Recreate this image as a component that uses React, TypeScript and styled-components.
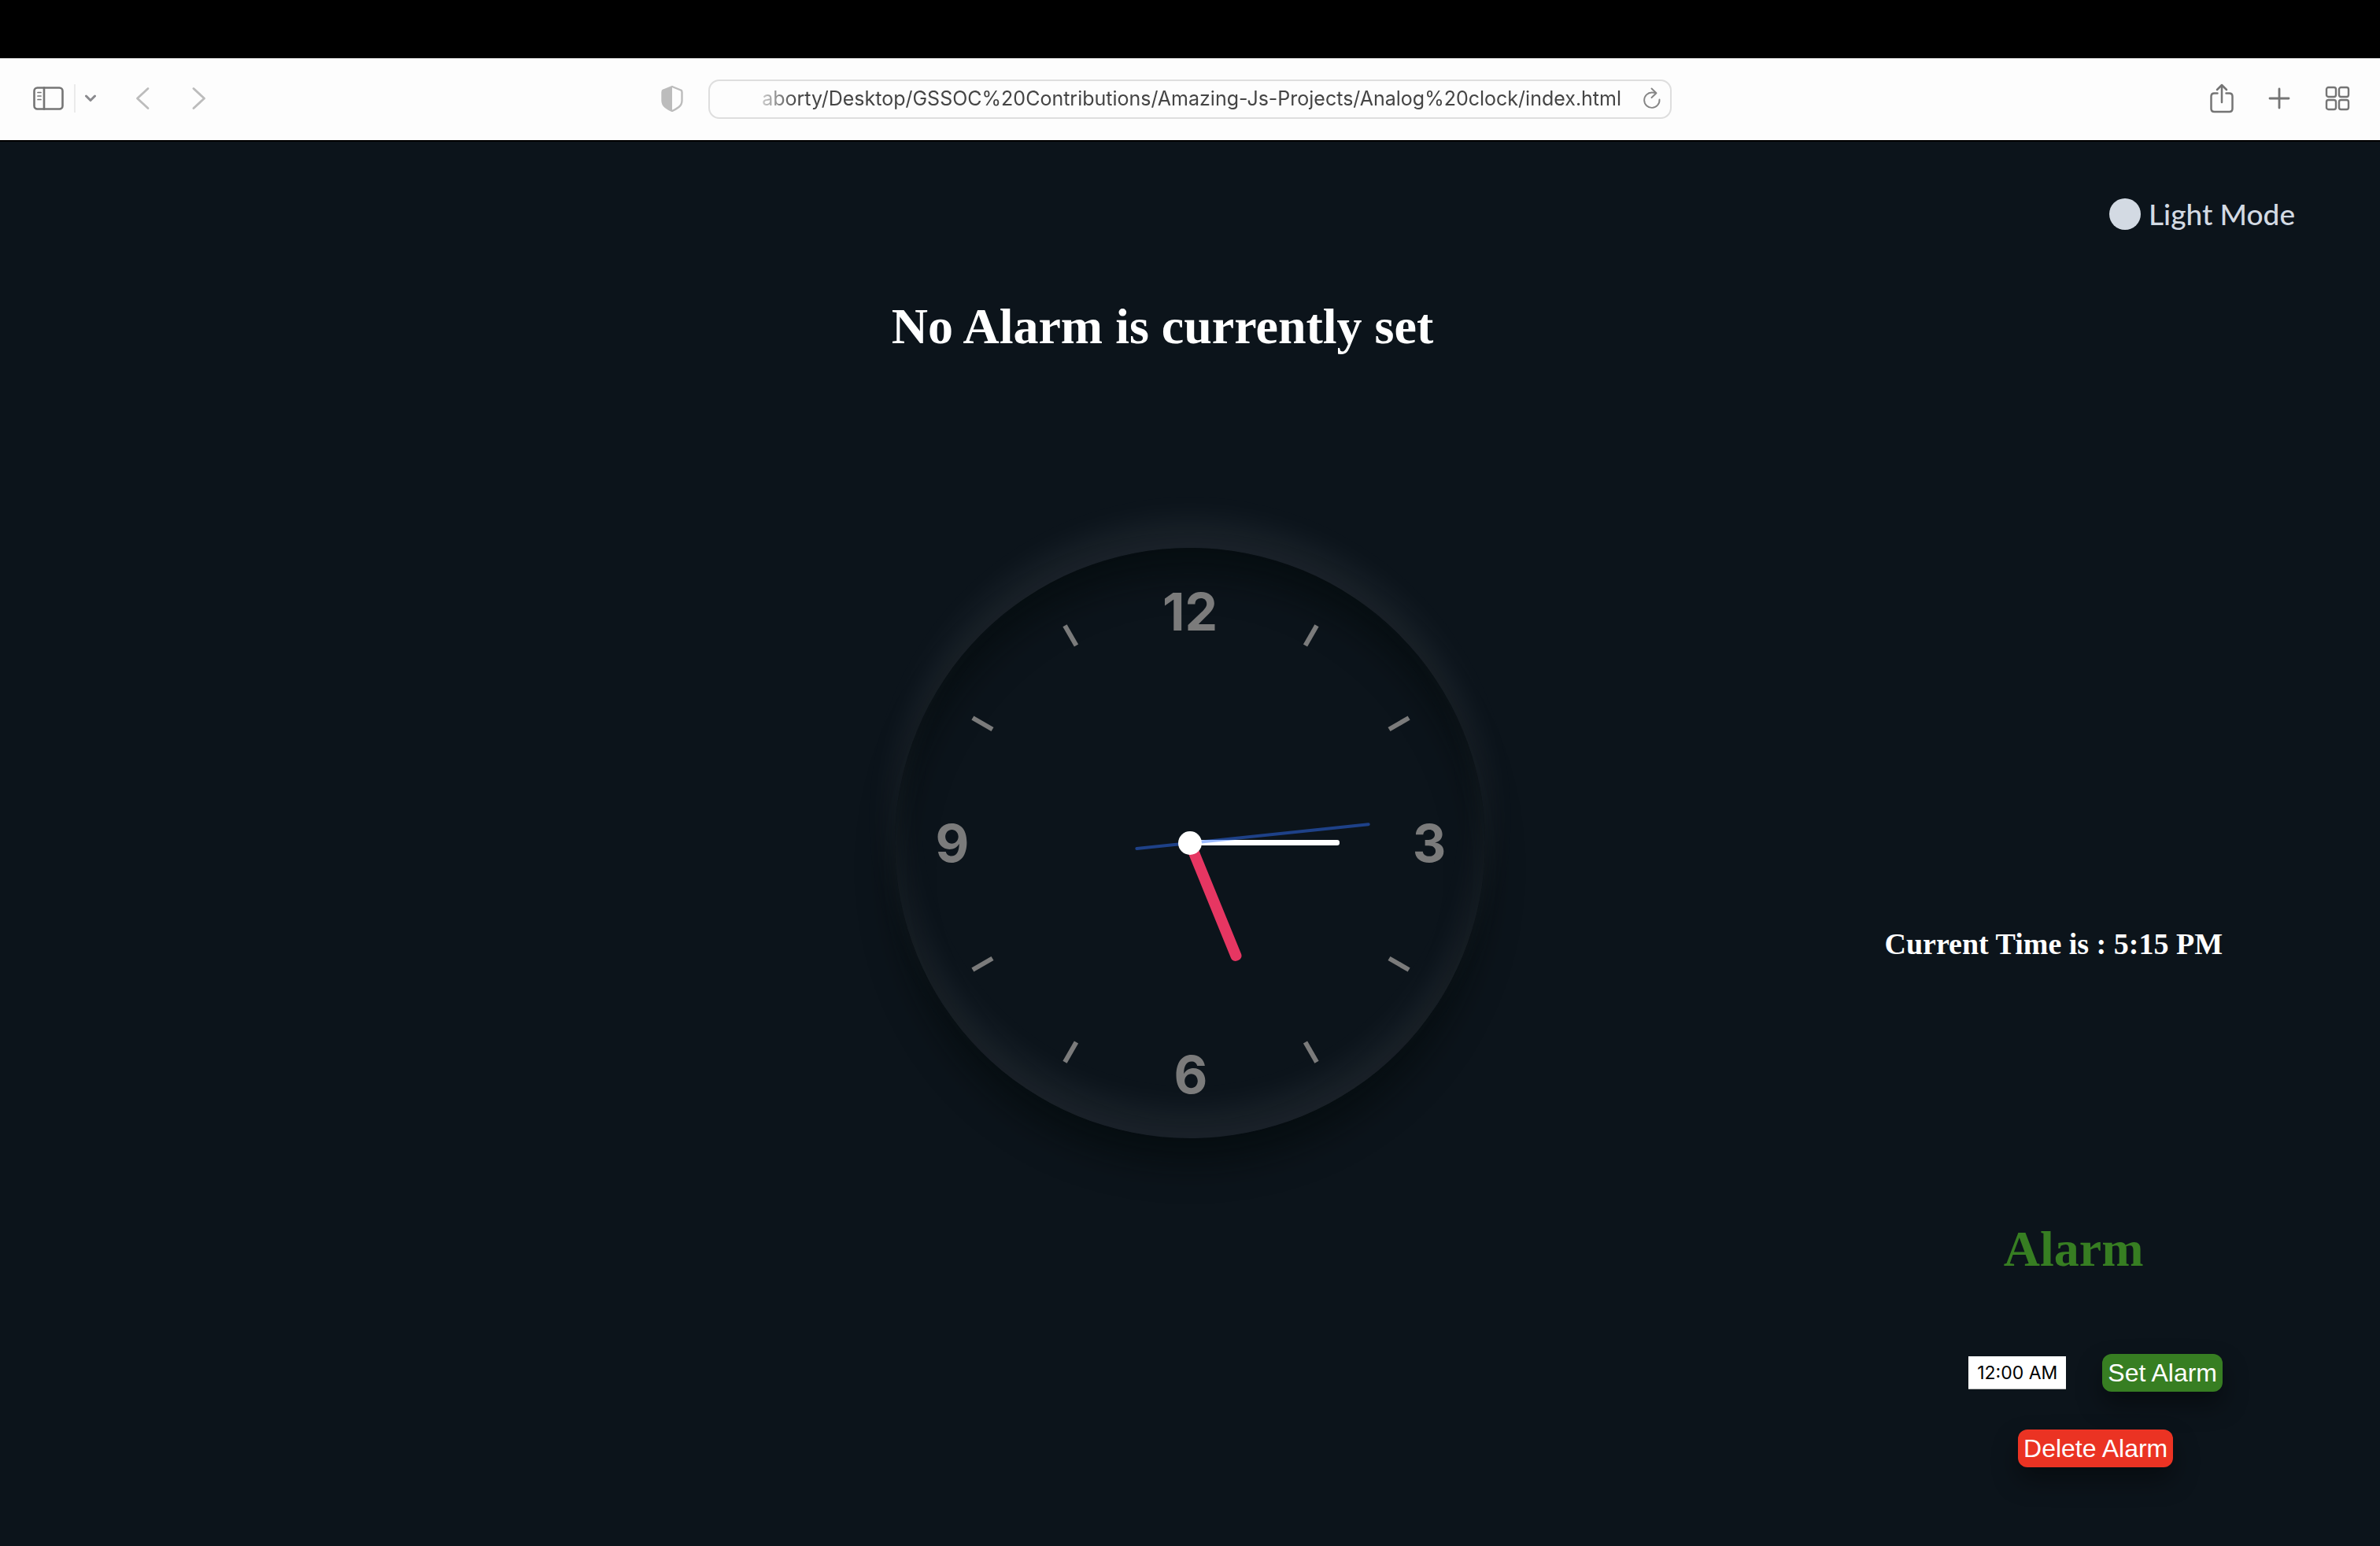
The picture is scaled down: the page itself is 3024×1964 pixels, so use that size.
import React, { useState } from "react";
import styled, { createGlobalStyle } from "styled-components";

const SERIF = `"Liberation Serif", "Times New Roman", serif`;
const SANS = `"Liberation Sans", Arial, sans-serif`;
const SYSTEM = `Inter, Roboto, sans-serif`;
const ROUND = `Lato, sans-serif`;

const GlobalStyle = createGlobalStyle`
  * { box-sizing: border-box; }
  body { margin: 0; background: #0c141b; }
  button, input { margin: 0; font: inherit; }
  h1, h2, p { margin: 0; }
`;

const Page = styled.div`
  min-height: 100vh;
  display: flex;
  flex-direction: column;
  background: #0c141b;
`;

const MenuBar = styled.div`
  height: 74px;
  background: #000;
`;

const Toolbar = styled.header`
  display: grid;
  grid-template-columns: 1fr minmax(400px, 1224px) 1fr;
  align-items: center;
  height: 106px;
  background: #fdfdfd;
  border-bottom: 2px solid #000;
`;

const ToolGroup = styled.div<{ $side: "left" | "right" }>`
  display: flex;
  align-items: center;
  justify-content: ${(p) => (p.$side === "left" ? "flex-start" : "flex-end")};
  gap: ${(p) => (p.$side === "left" ? 12 : 44)}px;
  padding: ${(p) => (p.$side === "left" ? "0 32px 2px 42px" : "0 38px 2px 0")};
`;

const Divider = styled.span`
  width: 2px;
  height: 36px;
  background: #ebebeb;
`;

const IconButton = styled.button<{ $tone?: string; $before?: number }>`
  display: flex;
  padding: 0;
  border: 0;
  background: none;
  color: ${(p) => p.$tone || "#757575"};
  margin-left: ${(p) => p.$before || 0}px;
`;

const ShieldButton = styled(IconButton)`
  margin-left: auto;
`;

const AddressBar = styled.div`
  display: flex;
  align-items: center;
  gap: 28px;
  height: 50px;
  padding: 0 12px 2px 50px;
  border: 2px solid #dedede;
  border-radius: 14px;
`;

const AddressInput = styled.input`
  flex: 1;
  min-width: 0;
  padding: 0;
  border: 0;
  outline: 0;
  background: none;
  color: #454545;
  font-family: ${SYSTEM};
  font-size: 25px;
  line-height: 32px;
  text-align: right;
  mask-image: linear-gradient(to right, transparent 0, #000 60px);
`;

const Content = styled.main`
  flex: 1;
  display: grid;
  grid-template-columns: 1fr 750px 1fr;
`;

const Center = styled.section`
  grid-column: 2;
  display: flex;
  flex-direction: column;
  align-items: center;
  gap: 245px;
  padding-top: 199px;
`;

const Status = styled.h1`
  padding-right: 70px;
  color: #fff;
  font: bold 64px/72px ${SERIF};
  white-space: nowrap;
`;

const ClockFace = styled.div`
  width: 750px;
  height: 750px;
  border-radius: 50%;
  box-shadow:
    0 -32px 44px rgba(240, 245, 255, 0.07),
    inset 0 -32px 44px rgba(240, 245, 255, 0.07),
    0 32px 44px rgba(0, 8, 8, 0.5),
    inset 0 32px 44px rgba(0, 8, 8, 0.5);
`;

const Side = styled.aside`
  display: flex;
  flex-direction: column;
  align-items: flex-end;
  padding: 68px 108px 96px 0;
`;

const ModeSwitch = styled.button`
  display: flex;
  align-items: center;
  gap: 10px;
  padding: 0;
  border: 0;
  background: none;
  color: #d3dae3;
  font: 500 37px/48px ${ROUND};
`;

const Dot = styled.span`
  width: 40px;
  height: 40px;
  border-radius: 50%;
  background: #d3dae3;
`;

const CurrentTime = styled.p`
  margin: 881px 92px 0 0;
  color: #fff;
  font: bold 38px/44px ${SERIF};
`;

const AlarmPanel = styled.form`
  display: flex;
  flex-direction: column;
  align-items: center;
  gap: 48px;
  margin: 330px 92px 0 0;
`;

const AlarmTitle = styled.h2`
  padding: 0 56px 49px 0;
  color: #377e22;
  font: bold 64px/72px ${SERIF};
`;

const AlarmRow = styled.div`
  display: flex;
  align-items: center;
  gap: 46px;
`;

const TimeInput = styled.input`
  width: 124px;
  height: 42px;
  padding: 0;
  border: 0;
  border-bottom: 1px solid #b8b8b8;
  border-radius: 0;
  background: #fff;
  color: #000;
  font: 23px/28px ${SYSTEM};
  text-align: center;
`;

const ActionButton = styled.button<{ $color: string }>`
  padding: 6px 7px;
  border: 0;
  border-radius: 12px;
  background: ${(p) => p.$color};
  box-shadow: 0 16px 32px rgba(0, 0, 0, 0.4);
  color: #fff;
  font: 32px/36px ${SANS};
`;

const stroke = (width: number) => ({
  fill: "none",
  stroke: "currentColor",
  strokeWidth: width,
  strokeLinecap: "round" as const,
  strokeLinejoin: "round" as const,
});

const SidebarIcon = () => (
  <svg width="40" height="30" viewBox="0 0 40 30">
    <g {...stroke(2.6)}>
      <rect x="1.5" y="1.5" width="36" height="27" rx="4" />
      <path d="M14 1.5v27" />
      <path strokeWidth="1.7" d="M6 7.5h4M6 12h4M6 16.500h4" />
    </g>
  </svg>
);
const ChevronDown = () => (
  <svg width="14" height="10" viewBox="0 0 14 10">
    <path {...stroke(3)} d="M1.500 2 7 7.500 12.500 2" />
  </svg>
);
const Back = () => (
  <svg width="18" height="30" viewBox="0 0 18 30">
    <path {...stroke(2.800)} d="M16 2.500 2.500 15 16 27.500" />
  </svg>
);
const Forward = () => (
  <svg width="18" height="30" viewBox="0 0 18 30">
    <path {...stroke(2.800)} d="M2 2.500 15.500 15 2 27.500" />
  </svg>
);
const Shield = () => (
  <svg width="28" height="34" viewBox="0 0 28 34">
    <path
      {...stroke(2.400)}
      d="M14 2 3 6.500Q1.500 7 1.500 9v10.500Q1.500 25 5.500 28q4 3 8.500 5 4.500-2 8.500-5 4-3 4-8.500V9q0-2-1.500-2.500Z"
    />
    <path fill="currentColor" d="M14 2 3 6.500Q1.500 7 1.500 9v10.500Q1.500 25 5.500 28q4 3 8.500 5Z" />
  </svg>
);
const Reload = () => (
  <svg width="22" height="28" viewBox="0 0 22 28">
    <path {...stroke(1.900)} d="M20.500 15.500A9.700 9.700 0 1 1 11 6.500q2.500 0 5 .6M10.500 1.500 16.500 7.200 10.500 13" />
  </svg>
);
const Share = () => (
  <svg width="30" height="38" viewBox="0 0 30 38">
    <path
      {...stroke(2.500)}
      d="M9.500 12.500H5.500q-4 0-4 4V32q0 4 4 4h19q4 0 4-4V16.500q0-4-4-4h-4M15 24V2M9 8l6-6 6 6"
    />
  </svg>
);
const Plus = () => (
  <svg width="28" height="28" viewBox="0 0 28 28">
    <path {...stroke(2.800)} d="M14 2v24M2 14h24" />
  </svg>
);
const Tiles = () => (
  <svg width="32" height="32" viewBox="0 0 32 32">
    <g {...stroke(2.400)}>
      {[2, 18].map((x) =>
        [2, 18].map((y) => <rect key={`${x}-${y}`} x={x} y={y} width="12" height="12" rx="2.500" />)
      )}
    </g>
  </svg>
);

const NUMERALS = [
  { label: "12", x: 375, y: 81 },
  { label: "3", x: 679, y: 375 },
  { label: "6", x: 376, y: 669 },
  { label: "9", x: 73, y: 375 },
];
const TICKS = [30, 60, 120, 150, 210, 240, 300, 330];

/** Dial and hands; the angles are clockwise degrees from twelve. */
const Dial = ({ hour, minute, second }: { hour: number; minute: number; second: number }) => (
  <svg width="750" height="750" viewBox="0 0 750 750" role="img" aria-label="Analog clock">
    {TICKS.map((a) => (
      <path key={a} d="M376 85v-29" stroke="#7b7b7b" strokeWidth="6" transform={`rotate(${a} 376 376)`} />
    ))}
    {NUMERALS.map((n) => (
      <text
        key={n.label}
        x={n.x}
        y={n.y + 24}
        fill="#7b7b7b"
        fontFamily={SYSTEM}
        fontSize="66"
        fontWeight="700"
        textAnchor="middle"
      >
        {n.label}
      </text>
    ))}
    <rect x="368" y="214" width="14" height="161" rx="6" fill="#e63662" transform={`rotate(${hour} 375 375)`} />
    <rect x="371" y="185" width="7" height="190" rx="3" fill="#fff" transform={`rotate(${minute} 375 375)`} />
    <rect
      x="373"
      y="145"
      width="4"
      height="300"
      rx="2"
      fill="#3373ff"
      fillOpacity="0.48"
      transform={`rotate(${second} 375 375)`}
    />
    <circle cx="375" cy="375" r="15" fill="#fff" />
  </svg>
);

export default function App() {
  const [url, setUrl] = useState(
    "aborty/Desktop/GSSOC%20Contributions/Amazing-Js-Projects/Analog%20clock/index.html"
  );
  const [time, setTime] = useState("12:00 AM");

  return (
    <Page>
      <GlobalStyle />
      <MenuBar />
      <Toolbar>
        <ToolGroup $side="left">
          <IconButton aria-label="Sidebar"><SidebarIcon /></IconButton>
          <Divider />
          <IconButton aria-label="Tab groups" $tone="#8a8a8e"><ChevronDown /></IconButton>
          <IconButton aria-label="Back" $tone="#bcbcbc" $before={38}><Back /></IconButton>
          <IconButton aria-label="Forward" $tone="#bcbcbc" $before={42}><Forward /></IconButton>
          <ShieldButton aria-label="Privacy report" $tone="#bcbcbc"><Shield /></ShieldButton>
        </ToolGroup>
        <AddressBar>
          <AddressInput aria-label="Address" value={url} onChange={(e) => setUrl(e.target.value)} />
          <IconButton aria-label="Reload" $tone="#858585"><Reload /></IconButton>
        </AddressBar>
        <ToolGroup $side="right">
          <IconButton aria-label="Share"><Share /></IconButton>
          <IconButton aria-label="New tab"><Plus /></IconButton>
          <IconButton aria-label="Tab overview"><Tiles /></IconButton>
        </ToolGroup>
      </Toolbar>
      <Content>
        <Center>
          <Status>No Alarm is currently set</Status>
          <ClockFace>
            <Dial hour={157.8} minute={90} second={84} />
          </ClockFace>
        </Center>
        <Side>
          <ModeSwitch type="button"><Dot />Light Mode</ModeSwitch>
          <CurrentTime>Current Time is : 5:15 PM</CurrentTime>
          <AlarmPanel onSubmit={(e) => e.preventDefault()}>
            <AlarmTitle>Alarm</AlarmTitle>
            <AlarmRow>
              <TimeInput aria-label="Alarm time" value={time} onChange={(e) => setTime(e.target.value)} />
              <ActionButton $color="#377e22">Set Alarm</ActionButton>
            </AlarmRow>
            <ActionButton $color="#eb3323" type="button">Delete Alarm</ActionButton>
          </AlarmPanel>
        </Side>
      </Content>
    </Page>
  );
}
